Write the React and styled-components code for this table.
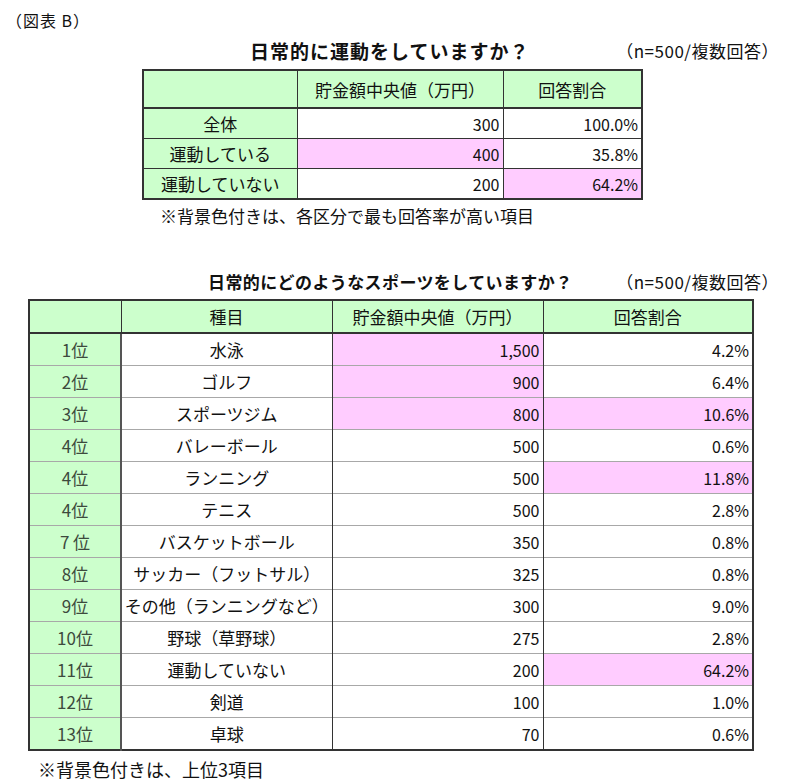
import React from "react";
import styled, { createGlobalStyle } from "styled-components";

const GlobalStyle = createGlobalStyle`
  body {
    margin: 0;
    background: #fff;
    color: #111;
    font-family: "Noto Sans CJK JP", "Liberation Sans", sans-serif;
  }
`;

const Page = styled.div`
  width: 801px;
  padding-top: 10px;
  display: flex;
  flex-direction: column;
`;

const FigLabel = styled.div`
  font-size: 16px;
  line-height: 20px;
  padding-left: 6px;
  letter-spacing: 1px;
`;

const TitleRow = styled.div`
  display: flex;
  align-items: center;
  height: ${(p) => p.$h}px;
  margin-top: ${(p) => p.$top}px;
  padding-left: ${(p) => p.$left}px;
  padding-right: 22px;
`;

const Title = styled.div`
  font-size: ${(p) => p.$size}px;
  font-weight: 700;
  letter-spacing: ${(p) => p.$ls || 0}px;
`;

const Sample = styled.div`
  margin-left: auto;
  font-size: 17px;
  letter-spacing: 0.5px;
`;

const TableWrap = styled.div`
  padding-left: ${(p) => p.$left}px;
  margin-top: ${(p) => p.$top}px;
`;

const Table = styled.table`
  border-collapse: collapse;
  table-layout: fixed;
  border: 2px solid #333;
`;

const HeadCell = styled.th`
  background: #ccffcc;
  font-weight: 400;
  font-size: 17px;
  text-align: center;
  padding: 0;
  height: ${(p) => p.$h}px;
  border-left: 1px solid #333;
  border-bottom: 2px solid #333;
`;

const Cell = styled.td`
  background: ${(p) => (p.$hl ? "#ffccff" : p.$green ? "#ccffcc" : "#fff")};
  font-size: ${(p) => (p.$num ? 16 : 17)}px;
  color: ${(p) => (p.$rank ? "#3d4a3d" : "#111")};
  text-align: ${(p) => (p.$num ? "right" : "center")};
  padding: 0 ${(p) => (p.$num ? 3 : 0)}px 0 0;
  height: ${(p) => p.$h}px;
  border-left: ${(p) => (p.$first ? "2px solid #555" : "1px solid #333")};
  border-top: 1px solid ${(p) => p.$line};
  white-space: nowrap;
`;

const Note = styled.div`
  padding-left: ${(p) => p.$left}px;
  margin-top: ${(p) => p.$top}px;
  font-size: ${(p) => p.$size}px;
  line-height: 22px;
`;

const overall = [
  { label: "全体", median: "300", share: "100.0%" },
  { label: "運動している", median: "400", share: "35.8%", hlMedian: true },
  { label: "運動していない", median: "200", share: "64.2%", hlShare: true },
];

const sports = [
  ["1位", "水泳", "1,500", "4.2%", true, false],
  ["2位", "ゴルフ", "900", "6.4%", true, false],
  ["3位", "スポーツジム", "800", "10.6%", true, true],
  ["4位", "バレーボール", "500", "0.6%", false, false],
  ["4位", "ランニング", "500", "11.8%", false, true],
  ["4位", "テニス", "500", "2.8%", false, false],
  ["7 位", "バスケットボール", "350", "0.8%", false, false],
  ["8位", "サッカー（フットサル）", "325", "0.8%", false, false],
  ["9位", "その他（ランニングなど）", "300", "9.0%", false, false],
  ["10位", "野球（草野球）", "275", "2.8%", false, false],
  ["11位", "運動していない", "200", "64.2%", false, true],
  ["12位", "剣道", "100", "1.0%", false, false],
  ["13位", "卓球", "70", "0.6%", false, false],
];

function OverallTable() {
  return (
    <Table style={{ width: 499 }}>
      <colgroup>
        <col style={{ width: 154 }} />
        <col style={{ width: 206 }} />
        <col style={{ width: 139 }} />
      </colgroup>
      <thead>
        <tr>
          <HeadCell $h={36} />
          <HeadCell $h={36}>貯金額中央値（万円）</HeadCell>
          <HeadCell $h={36}>回答割合</HeadCell>
        </tr>
      </thead>
      <tbody>
        {overall.map((r) => (
          <tr key={r.label}>
            <Cell $green $h={29} $line="#333">{r.label}</Cell>
            <Cell $num $hl={r.hlMedian} $h={29} $line="#333">{r.median}</Cell>
            <Cell $num $hl={r.hlShare} $h={29} $line="#333">{r.share}</Cell>
          </tr>
        ))}
      </tbody>
    </Table>
  );
}

function SportsTable() {
  return (
    <Table style={{ width: 724 }}>
      <colgroup>
        <col style={{ width: 92 }} />
        <col style={{ width: 211 }} />
        <col style={{ width: 211 }} />
        <col style={{ width: 210 }} />
      </colgroup>
      <thead>
        <tr>
          <HeadCell $h={31} />
          <HeadCell $h={31}>種目</HeadCell>
          <HeadCell $h={31}>貯金額中央値（万円）</HeadCell>
          <HeadCell $h={31}>回答割合</HeadCell>
        </tr>
      </thead>
      <tbody>
        {sports.map(([rank, name, median, share, hlM, hlS], i) => {
          const line = i === 0 ? "#333" : "#a8a8a8";
          return (
            <tr key={i}>
              <Cell $green $rank $h={31} $line={line}>{rank}</Cell>
              <Cell $first $h={31} $line={line}>{name}</Cell>
              <Cell $num $hl={hlM} $h={31} $line={line}>{median}</Cell>
              <Cell $num $hl={hlS} $h={31} $line={line}>{share}</Cell>
            </tr>
          );
        })}
      </tbody>
    </Table>
  );
}

export default function App() {
  return (
    <>
      <GlobalStyle />
      <Page>
        <FigLabel>（図表 B）</FigLabel>

        <TitleRow $h={24} $top={8} $left={250}>
          <Title $size={19} $ls={1}>日常的に運動をしていますか？</Title>
          <Sample>（n=500/複数回答）</Sample>
        </TitleRow>
        <TableWrap $left={142} $top={7}>
          <OverallTable />
        </TableWrap>
        <Note $left={160} $top={5} $size={17}>※背景色付きは、各区分で最も回答率が高い項目</Note>

        <TitleRow $h={22} $top={43} $left={208}>
          <Title $size={17} $ls={0.4}>日常的にどのようなスポーツをしていますか？</Title>
          <Sample>（n=500/複数回答）</Sample>
        </TitleRow>
        <TableWrap $left={28} $top={7}>
          <SportsTable />
        </TableWrap>
        <Note $left={38} $top={7} $size={18}>※背景色付きは、上位3項目</Note>
      </Page>
    </>
  );
}
